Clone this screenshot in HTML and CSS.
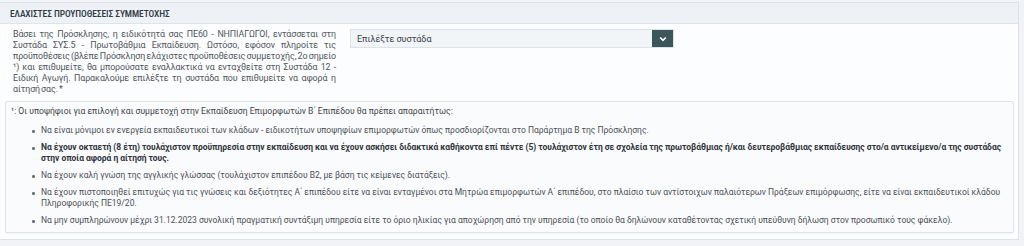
FILE: index.html
```html
<!DOCTYPE html>
<html lang="el">
<head>
<meta charset="utf-8">
<link rel="stylesheet" href="styles.css">
</head>
<body>
<div class="page">
  <section class="panel">
    <header class="panel-head">ΕΛΑΧΙΣΤΕΣ ΠΡΟΥΠΟΘΕΣΕΙΣ ΣΥΜΜΕΤΟΧΗΣ</header>
    <div class="panel-body">
      <p class="intro"><span class="ln">Βάσει της Πρόσκλησης, η ειδικότητά σας ΠΕ60 - ΝΗΠΙΑΓΩΓΟΙ, εντάσσεται στη</span>
<span class="ln">Συστάδα ΣΥΣ.5 - Πρωτοβάθμια Εκπαίδευση. Ωστόσο, εφόσον πληροίτε τις</span>
<span class="ln">προϋποθέσεις (βλέπε Πρόσκληση ελάχιστες προϋποθέσεις συμμετοχής, 2ο σημείο</span>
<span class="ln">¹) και επιθυμείτε, θα μπορούσατε εναλλακτικά να ενταχθείτε στη Συστάδα 12 -</span>
<span class="ln">Ειδική Αγωγή. Παρακαλούμε επιλέξτε τη συστάδα που επιθυμείτε να αφορά η</span>
<span class="ln last">αίτησή σας. *</span></p>
      <div class="select">
        <span class="select-text">Επιλέξτε συστάδα</span>
        <span class="select-btn"><svg width="8" height="6" viewBox="0 0 8 6"><path d="M1.2 1.5 L4 4.3 L6.8 1.5" fill="none" stroke="#fff" stroke-width="1.6"/></svg></span>
      </div>
    </div>
    <div class="note">
      <p class="note-title">¹: Οι υποψήφιοι για επιλογή και συμμετοχή στην Εκπαίδευση Επιμορφωτών Β΄ Επιπέδου θα πρέπει απαραιτήτως:</p>
      <ul class="reqs">
        <li>Να είναι μόνιμοι εν ενεργεία εκπαιδευτικοί των κλάδων - ειδικοτήτων υποψηφίων επιμορφωτών όπως προσδιορίζονται στο Παράρτημα Β της Πρόσκλησης.</li>
        <li class="strong">Να έχουν οκταετή (8 έτη) τουλάχιστον προϋπηρεσία στην εκπαίδευση και να έχουν ασκήσει διδακτικά καθήκοντα επί πέντε (5) τουλάχιστον έτη σε σχολεία της πρωτοβάθμιας ή/και δευτεροβάθμιας εκπαίδευσης στο/α αντικείμενο/α της συστάδας στην οποία αφορά η αίτησή τους.</li>
        <li>Να έχουν καλή γνώση της αγγλικής γλώσσας (τουλάχιστον επιπέδου Β2, με βάση τις κείμενες διατάξεις).</li>
        <li>Να έχουν πιστοποιηθεί επιτυχώς για τις γνώσεις και δεξιότητες Α΄ επιπέδου είτε να είναι ενταγμένοι στα Μητρώα επιμορφωτών Α΄ επιπέδου, στο πλαίσιο των αντίστοιχων παλαιότερων Πράξεων επιμόρφωσης, είτε να είναι εκπαιδευτικοί κλάδου Πληροφορικής ΠΕ19/20.</li>
        <li>Να μην συμπληρώνουν μέχρι 31.12.2023 συνολική πραγματική συντάξιμη υπηρεσία είτε το όριο ηλικίας για αποχώρηση από την υπηρεσία (το οποίο θα δηλώνουν καταθέτοντας σχετική υπεύθυνη δήλωση στον προσωπικό τους φάκελο).</li>
      </ul>
    </div>
  </section>
</div>
</body>
</html>
```
FILE: styles.css
```css
* { box-sizing: border-box; }
html, body { margin: 0; padding: 0; }
body {
  background: #f1f3f6;
  font-family: Roboto, "Noto Sans", sans-serif;
  color: #4a4f55;
  width: 1024px;
  height: 246px;
  overflow: hidden;
}
.page {
  padding: 2px 5px 0 0;
}
.panel {
  background: #fcfdfe;
  border: 1px solid #dde2e7;
  border-left: none;
  width: 1019px;
}
.panel-head {
  background: #eef2f6;
  border-bottom: 1px solid #dfe4ea;
  height: 21px;
  padding: 0 10px;
  display: flex;
  align-items: center;
  font-family: "Roboto Condensed", "Liberation Sans Narrow", Roboto, sans-serif;
  font-size: 9.5px;
  font-weight: 500;
  color: #2f3b46;
  letter-spacing: -0.1px;
}
.panel-body {
  display: flex;
  align-items: flex-start;
  gap: 14px;
  padding: 5px 13px 4px 13px;
}
.intro {
  margin: 0;
  width: 323px;
  font-size: 8.9px;
  letter-spacing: -0.1px;
  word-spacing: -1px;
  line-height: 11px;
  color: #50565c;
}
.intro .ln {
  display: block;
  white-space: nowrap;
  text-align: justify;
  text-align-last: justify;
}
.intro .ln.last { text-align-last: left; }
.select {
  width: 324px;
  height: 19px;
  display: flex;
  align-items: stretch;
  border: 1px solid #dce2e8;
  background: #f2f5f8;
}
.select-text {
  flex: 1;
  display: flex;
  align-items: center;
  padding-left: 6px;
  font-size: 9px;
  color: #3c4249;
}
.select-btn {
  width: 21px;
  background: #3d5659;
  display: flex;
  align-items: center;
  justify-content: center;
}
.note {
  margin: 2px 4px 6px 5px;
  border: 1px solid #dfe4e9;
  background: #fafbfd;
  padding: 4px 5px 6px 5px;
  border-radius: 2px;
  box-shadow: 0 1px 1px rgba(0,0,0,0.04);
}
.note-title {
  margin: 0 0 8px 0;
  font-size: 8.6px;
  line-height: 11px;
  color: #3e444a;
}
.reqs {
  margin: 0;
  padding: 0 0 0 30px;
  list-style: none;
}
.reqs li {
  position: relative;
  font-size: 8.5px;
  line-height: 11px;
  color: #4a5056;
  margin-bottom: 6px;
}
.reqs li::before {
  content: "";
  position: absolute;
  left: -9px;
  top: 5px;
  width: 2.5px;
  height: 2.5px;
  border-radius: 50%;
  background: #6a7077;
}
.reqs li.strong { font-weight: 700; color: #2f353b; letter-spacing: -0.04px; }
.reqs li:last-child { margin-bottom: 0; }
```
